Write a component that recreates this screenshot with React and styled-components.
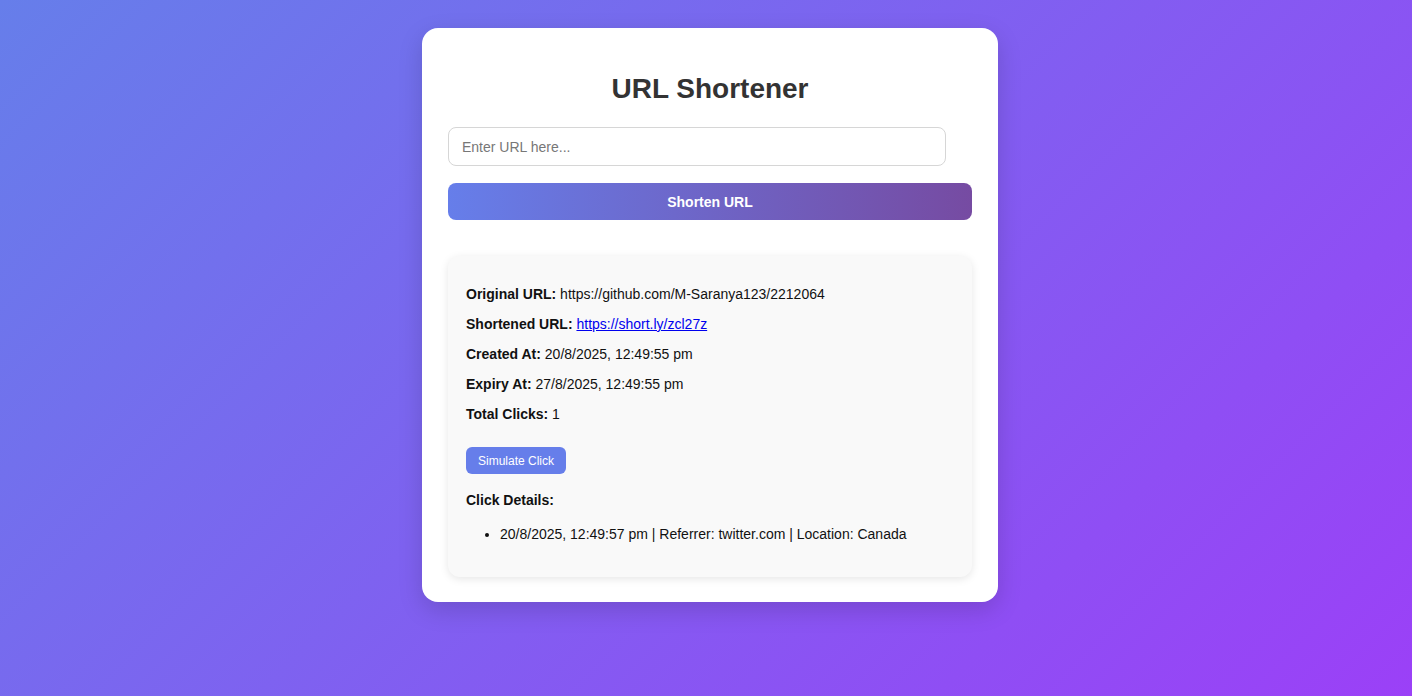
import styled, { createGlobalStyle } from 'styled-components';

const GlobalStyle = createGlobalStyle`
    html, body {
        margin: 0;
        padding: 0;
    }
    body {
        font-family: "Liberation Sans", Arial, sans-serif;
        background: linear-gradient(135deg, #667eea 0%, #9b40f7 100%);
        min-height: 100vh;
    }
`;

const Page = styled.div`
    min-height: 100vh;
    display: flex;
    justify-content: center;
    align-items: flex-start;
    padding: 28px 0 0 8px;
    box-sizing: border-box;
`;

const Card = styled.div`
    width: 576px;
    box-sizing: border-box;
    background: white;
    border-radius: 16px;
    padding: 26px 26px 25px;
    box-shadow: 0 8px 24px rgba(0, 0, 0, 0.15);
    h1 {
        text-align: center;
        color: #333;
        font-size: 28px;
        margin: 19px 0 22px;
    }
`;

const Input = styled.input`
    display: block;
    width: 95%;
    height: 39px;
    box-sizing: border-box;
    padding: 0 13px;
    border: 1px solid #d6d6d6;
    border-radius: 8px;
    font-family: inherit;
    font-size: 14px;
    color: #333;
    &::placeholder {
        color: #777;
    }
`;

const ShortenButton = styled.button`
    display: block;
    width: 100%;
    height: 37px;
    margin-top: 17px;
    border: none;
    border-radius: 8px;
    background: linear-gradient(90deg, #667eea 0%, #764ba2 100%);
    color: white;
    font-family: inherit;
    font-size: 14px;
    font-weight: bold;
    cursor: pointer;
`;

const Result = styled.div`
    margin-top: 36px;
    background: #f9f9f9;
    border-radius: 12px;
    padding: 16px 18px 21px;
    box-shadow: 0 2px 8px rgba(0, 0, 0, 0.1);
    font-size: 14px;
    color: #111;
    p {
        margin: 14px 0;
    }
    a {
        color: #0000ee;
    }
    h4 {
        font-size: 14px;
        margin: 18px 0;
    }
    ul {
        margin: 18px 0 14px;
        padding-left: 34px;
    }
`;

const SmallButton = styled.button`
    display: block;
    margin-top: 25px;
    height: 27px;
    padding: 0 12px;
    border: none;
    border-radius: 6px;
    background: #667eea;
    color: white;
    font-family: inherit;
    font-size: 12px;
    cursor: pointer;
`;

const App = () => {
    return (
        <>
            <GlobalStyle />
            <Page>
                <Card>
                    <h1>URL Shortener</h1>
                    <Input type="text" placeholder="Enter URL here..." />
                    <ShortenButton>Shorten URL</ShortenButton>
                    <Result>
                        <p><strong>Original URL:</strong> https://github.com/M-Saranya123/2212064</p>
                        <p><strong>Shortened URL:</strong> <a href="#">https://short.ly/zcl27z</a></p>
                        <p><strong>Created At:</strong> 20/8/2025, 12:49:55 pm</p>
                        <p><strong>Expiry At:</strong> 27/8/2025, 12:49:55 pm</p>
                        <p><strong>Total Clicks:</strong> 1</p>
                        <SmallButton>Simulate Click</SmallButton>
                        <h4>Click Details:</h4>
                        <ul>
                            <li>20/8/2025, 12:49:57 pm | Referrer: twitter.com | Location: Canada</li>
                        </ul>
                    </Result>
                </Card>
            </Page>
        </>
    );
};

export default App;
